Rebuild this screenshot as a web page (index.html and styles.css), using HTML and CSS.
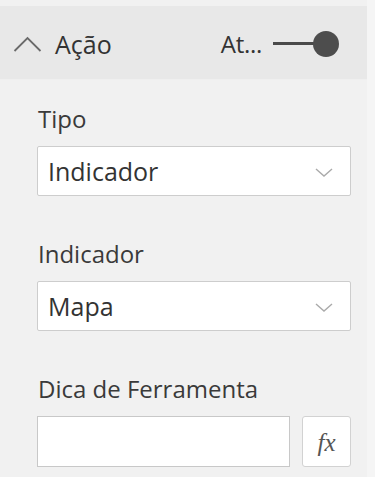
FILE: index.html
```html
<!DOCTYPE html>
<html lang="pt">
<head>
<meta charset="utf-8">
<link rel="stylesheet" href="styles.css">
</head>
<body>
<div class="panel">
  <div class="header">
    <svg class="chev-up" width="29" height="16" viewBox="0 0 29 16"><polyline points="1.5,15 14.5,2 27.5,15" fill="none" stroke="#6a6a6a" stroke-width="1.8"/></svg>
    <span class="title">Ação</span>
    <span class="state">At...</span>
    <span class="toggle"><span class="track"></span><span class="knob"></span></span>
  </div>
  <div class="body">
    <div class="field">
      <div class="label">Tipo</div>
      <div class="select"><span>Indicador</span>
        <svg class="chev-down" width="18" height="9" viewBox="0 0 18 9"><polyline points="1,1 9,8 17,1" fill="none" stroke="#aaaaaa" stroke-width="1.4"/></svg>
      </div>
    </div>
    <div class="field">
      <div class="label">Indicador</div>
      <div class="select"><span>Mapa</span>
        <svg class="chev-down" width="18" height="9" viewBox="0 0 18 9"><polyline points="1,1 9,8 17,1" fill="none" stroke="#aaaaaa" stroke-width="1.4"/></svg>
      </div>
    </div>
    <div class="field">
      <div class="label">Dica de Ferramenta</div>
      <div class="row">
        <div class="input"></div>
        <div class="fx"><span>fx</span></div>
      </div>
    </div>
  </div>
</div>
</body>
</html>
```

FILE: styles.css
```css
html, body {
  margin: 0;
  padding: 0;
}
body {
  background: #f5f5f5;
  font-family: "Open Sans", "Noto Sans", sans-serif;
  color: #333;
  width: 375px;
  height: 477px;
  overflow: hidden;
}
.panel {
  width: 367px;
  height: 477px;
  background: #f1f1f1;
  padding-top: 6px;
  box-sizing: border-box;
}
.header {
  height: 74px;
  background: #e8e8e8;
  display: flex;
  align-items: center;
  padding-left: 13px;
  box-sizing: border-box;
  border-bottom: 1px solid #efefef;
}
.chev-up {
  margin-top: 2px;
}
.title {
  font-size: 25px;
  line-height: 30px;
  margin-left: 13px;
  margin-top: 2px;
  color: #333;
}
.state {
  font-size: 24px;
  line-height: 30px;
  margin-left: auto;
  margin-top: 2px;
  color: #333;
  letter-spacing: -0.3px;
}
.toggle {
  position: relative;
  width: 66px;
  height: 26px;
  margin-left: 11px;
  margin-right: 28px;
  margin-top: 3px;
}
.track {
  position: absolute;
  left: 0;
  top: 11px;
  width: 44px;
  height: 3px;
  background: #4a4a4a;
}
.knob {
  position: absolute;
  left: 40px;
  top: 0;
  width: 26px;
  height: 26px;
  border-radius: 50%;
  background: #4d4d4d;
}
.body {
  padding: 24px 16px 0 37px;
  display: flex;
  flex-direction: column;
  gap: 43px;
}
.label {
  font-size: 24px;
  line-height: 30px;
  color: #3a3a3a;
  margin-left: 1px;
  margin-bottom: 12px;
}
.select {
  height: 50px;
  background: #fff;
  border: 1px solid #cdcdcd;
  border-radius: 2px;
  box-sizing: border-box;
  display: flex;
  align-items: center;
  padding: 0 17px 0 10px;
  font-size: 25px;
  color: #333;
}
.select span {
  flex: 1;
}
.chev-down {
  margin-top: 2px;
}
.row {
  display: flex;
  gap: 12px;
}
.input {
  flex: 1;
  height: 51px;
  background: #fff;
  border: 1px solid #c8c8c8;
  box-sizing: border-box;
}
.fx {
  width: 49px;
  height: 51px;
  background: #fff;
  border: 1px solid #d2d2d2;
  border-radius: 3px;
  box-sizing: border-box;
  display: flex;
  align-items: center;
  justify-content: center;
}
.fx span {
  font-family: "Liberation Serif", "DejaVu Serif", serif;
  font-style: italic;
  font-size: 25px;
  color: #555;
  margin-top: 2px;
}
```
